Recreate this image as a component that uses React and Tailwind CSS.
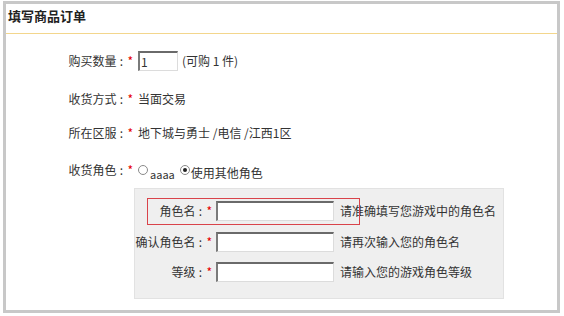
const font = { fontFamily: '"Noto Sans CJK SC", "Noto Sans", sans-serif' };

const Star = () => <span className="text-[#e60000] ml-[1px]">*</span>;
const Colon = () => <span className="inline-block w-[10px] text-center">:</span>;

const Field = ({ w }) => (
  <span
    className={`block h-[20px] ${w} bg-white border-t-2 border-l-2 border-t-[#6a6a6a] border-l-[#7a7a7a] border-b border-r border-b-[#dcdcdc] border-r-[#dcdcdc] text-[12px] leading-[17px] pl-[2px] text-[#333]`}
  />
);

const Radio = ({ checked }) => (
  <span className="inline-flex w-[10px] h-[10px] rounded-full border border-[#8a8a8a] bg-white items-center justify-center">
    {checked && <span className="w-[4px] h-[4px] rounded-full bg-[#222]" />}
  </span>
);

const Row = ({ label, className, children }) => (
  <div className={`flex items-center h-[20px] ${className}`}>
    <div className="w-[128px] text-right whitespace-nowrap pr-[1px]">
      {label}
      <Colon />
      <Star />
    </div>
    <div className="ml-[4px] flex items-center whitespace-nowrap">{children}</div>
  </div>
);

const SubRow = ({ label, hint, className }) => (
  <div className={`flex items-center h-[20px] ${className}`}>
    <div className="w-[77px] text-right whitespace-nowrap">
      {label}
      <Colon />
      <Star />
    </div>
    <div className="ml-[4px]">
      <Field w="w-[118px]" />
    </div>
    <span className="ml-[6px] whitespace-nowrap">{hint}</span>
  </div>
);

export default function App() {
  return (
    <div className="w-[564px] h-[316px] bg-white pt-px pl-[3px] text-[12px] text-[#333]" style={font}>
      <div className="w-[557px] h-[312px] border-[3px] border-[#c8c8c8]">
        <div className="h-[30px] border-b border-[#f3d68c] pl-[2px] pt-[3px] text-[13px] font-bold text-[#222] leading-[18px]">
          填写商品订单
        </div>

        <Row label="购买数量" className="mt-[17px]">
          <span className="flex w-[40px] h-[20px] bg-white border-t-2 border-l-2 border-t-[#6a6a6a] border-l-[#7a7a7a] border-b border-r border-b-[#dcdcdc] border-r-[#dcdcdc] pl-[1px] leading-[17px]">
            1
          </span>
          <span className="ml-[4px]">(可购 1 件)</span>
        </Row>

        <Row label="收货方式" className="mt-[18px]">
          <span>当面交易</span>
        </Row>

        <Row label="所在区服" className="mt-[14px]">
          <span>地下城与勇士 /电信 /江西1区</span>
        </Row>

        <Row label="收货角色" className="mt-[17px]">
          <Radio />
          <span className="ml-[2px] mt-[8px] text-[11px]">aaaa</span>
          <span className="ml-[5px] flex">
            <Radio checked />
          </span>
          <span className="ml-[1px] mt-[6px]">使用其他角色</span>
        </Row>

        <div className="ml-[128px] mt-[8px] w-[370px] h-[111px] bg-[#efefef] border border-[#e2e2e2] pt-[12px]">
          <div className="relative">
            <SubRow label="角色名" hint="请准确填写您游戏中的角色名" />
            <div className="absolute left-[12px] top-[-3px] w-[213px] h-[27px] border border-[#d9434a]" />
          </div>
          <SubRow label="确认角色名" hint="请再次输入您的角色名" className="mt-[11px]" />
          <SubRow label="等级" hint="请输入您的游戏角色等级" className="mt-[10px]" />
        </div>
      </div>
    </div>
  );
}
